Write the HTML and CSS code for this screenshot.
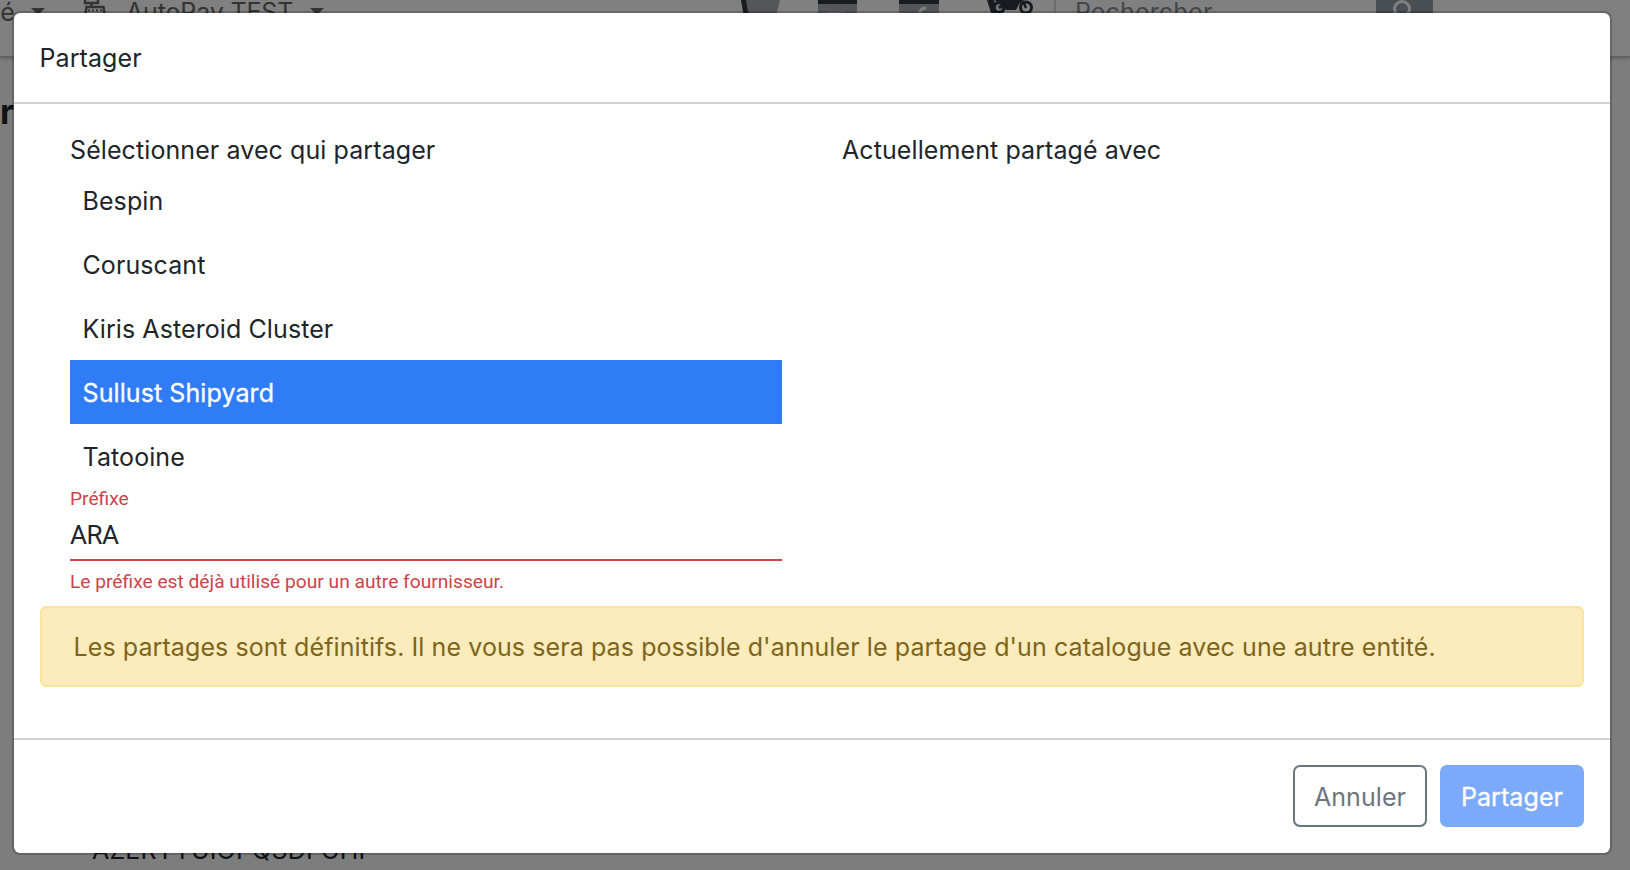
FILE: index.html
```html
<!DOCTYPE html>
<html lang="fr">
<head>
<meta charset="utf-8">
<title>Partager</title>
<link rel="stylesheet" href="styles.css">
</head>
<body>
<div class="page">
  <header class="navbar">
    <span class="nav-text nav-first">Société</span>
    <svg class="caret caret-first" width="14" height="7"><path d="M0 0h14l-7 7z"/></svg>
    <svg class="register" width="24" height="26" viewBox="0 0 24 26"><path d="M2 2v5h13V2M8.500 8v3M3.500 11h17l2 14H1.500z" fill="none" stroke="#333" stroke-width="2.500"/><path d="M5 14.500h2M9 14.500h2M13 14.500h2M17 14.500h2" stroke="#333" stroke-width="2"/></svg>
    <span class="nav-text nav-company">AutoPay TEST</span>
    <svg class="caret caret-second" width="14" height="7"><path d="M0 0h14l-7 7z"/></svg>
    <svg class="tools" width="310" height="24" viewBox="0 0 310 24">
      <path d="M3 0h37l-6 24H9z" fill="#545659"/><path d="M1 0h5l4 24H5z" fill="#1a1b20"/>
      <path d="M78 0h39v24H78zM159 0h40v24h-40z" fill="#545659"/>
      <path d="M78 0h39v4H78zM159 0h40v4h-40z" fill="#1a1b20"/>
      <path d="M86 13l8-1 5 1 4-2 3 2" fill="none" stroke="#707070" stroke-width="1"/>
      <path d="M186 8q-6 0-7 7" fill="none" stroke="#808080" stroke-width="3"/>
      <path d="M247 0h7l2 13h-5zM254 0h30l-5 4-3 6h-10l-3-6-5-2z" fill="#1a1b20"/>
      <circle cx="259" cy="7.500" r="5" fill="#777" stroke="#1a1b20" stroke-width="3.500"/>
      <path d="M259 8l5-4" stroke="#1a1b20" stroke-width="3"/>
      <circle cx="286" cy="7.500" r="5.500" fill="#808080" stroke="#1a1b20" stroke-width="3"/>
      <path d="M283 1l3 7" stroke="#1a1b20" stroke-width="2.500"/>
    </svg>
    <div class="search"><span>Rechercher</span></div>
    <div class="search-btn"><svg class="lens" width="57" height="24"><circle cx="26" cy="9" r="7.500" fill="none" stroke="#808080" stroke-width="3"/><path d="M31 15l7 7" stroke="#808080" stroke-width="3"/></svg></div>
  </header>
  <h1 class="page-title">Partager</h1>
  <div class="page-row">AZERTYUIOPQSDFGHI</div>
</div>
<div class="modal" role="dialog">
  <div class="modal-header">Partager</div>
  <div class="modal-body">
    <div class="columns">
      <section class="column">
        <div class="heading">Sélectionner avec qui partager</div>
        <ul class="list">
          <li>Bespin</li>
          <li>Coruscant</li>
          <li>Kiris Asteroid Cluster</li>
          <li class="selected">Sullust Shipyard</li>
          <li>Tatooine</li>
        </ul>
        <div class="field">
          <label class="field-label">Préfixe</label>
          <div class="field-value">ARA</div>
          <div class="field-error">Le préfixe est déjà utilisé pour un autre fournisseur.</div>
        </div>
      </section>
      <section class="column">
        <div class="heading">Actuellement partagé avec</div>
      </section>
    </div>
    <div class="alert">Les partages sont définitifs. Il ne vous sera pas possible d'annuler le partage d'un catalogue avec une autre entité.</div>
  </div>
  <div class="modal-footer">
    <button class="btn btn-cancel">Annuler</button>
    <button class="btn btn-share">Partager</button>
  </div>
</div>
</body>
</html>
```
FILE: styles.css
```css
* { box-sizing: border-box; }
body {
  margin: 0;
  height: 870px;
  overflow: hidden;
  background: #7d7d7d;
  color: #212529;
  font: 25px/39px Inter, "Liberation Sans", sans-serif;
  letter-spacing: .09px;
}
.page { height: 870px; overflow: hidden; display: flex; flex-direction: column; }
.navbar {
  display: flex;
  align-items: flex-start;
  flex: none;
  height: 57px;
  background: #808080;
  border-bottom: 1px solid #606060;
  box-shadow: 0 1px 4px rgba(0, 0, 0, .3);
}
.nav-text { flex: none; color: #333; line-height: 30px; margin-top: -3px; white-space: nowrap; }
.nav-first { width: 15px; display: flex; justify-content: flex-end; }
.caret { flex: none; fill: #333; margin-top: 8px; }
.caret-first { margin-left: 16px; }
.register { flex: none; margin-left: 38px; margin-top: -4px; }
.nav-company { width: 170px; margin-left: 19px; letter-spacing: -.15px; }
.caret-second { margin-left: 14px; }
.tools { flex: none; margin-left: 416px; }
.search { flex: none; width: 322px; height: 44px; margin-left: 4px; border-left: 2px solid #6c6c6c; padding-left: 19px; color: #42474c; line-height: 30px; letter-spacing: .15px; }
.search span { display: block; margin-top: -3px; }
.search-btn { flex: none; width: 57px; height: 44px; background: #4a4f54; }
.lens { display: block; }
.page-title { display: flex; justify-content: flex-end; margin: 35px 0 0; width: 14px; font-size: 34px; line-height: 40px; color: #101214; white-space: nowrap; }
.page-row { margin: auto 0 5px 92px; color: #101214; line-height: 30px; letter-spacing: .2px; }

.modal {
  position: absolute;
  left: 12px;
  top: 11px;
  width: 1600px;
  height: 844px;
  display: flex;
  flex-direction: column;
  background: #fff;
  background-clip: padding-box;
  border: 2px solid rgba(0, 0, 0, .2);
  border-radius: 8px;
}
.modal-header { height: 91px; padding: 26px 25.5px; border-bottom: 2px solid #ced2d6; }
.modal-body { flex: 1; padding: 26px 26px 0; }
.columns { display: flex; height: 476px; }
.column { flex: 1; padding: 0 30px; }
.heading { height: 38px; line-height: 41px; white-space: nowrap; }
.list { list-style: none; margin: 0; padding: 0; }
.list li { height: 64px; padding: 0 12.5px; line-height: 66px; }
.list .selected { background: #307cf6; color: #fff; -webkit-text-stroke: .3px #fff; }
.list li:last-child { height: 58px; }
.field { font-family: Roboto, sans-serif; color: #cf424a; letter-spacing: 0; }
.field-label { display: block; height: 32px; font-size: 19.2px; line-height: 34px; }
.field-value { height: 47px; border-bottom: 2px solid #cf424a; color: #212529; font-size: 26px; line-height: 42px; letter-spacing: -.5px; }
.field-error { font-size: 19.2px; line-height: 42px; white-space: nowrap; }
.alert {
  height: 81px;
  padding: 20px 31.5px;
  border: 2px solid #fbe4a0;
  border-radius: 6px;
  background: #fcebbb;
  color: #7d6520;
  white-space: nowrap;
}
.modal-footer {
  display: flex;
  justify-content: flex-end;
  gap: 13px;
  height: 115px;
  padding: 25px 26px;
  border-top: 2px solid #ced2d6;
}
.btn { height: 62px; padding: 2px 0 0; border-radius: 7px; font: inherit; letter-spacing: inherit; }
.btn-cancel { width: 134px; border: 2px solid #6c757d; background: #fff; color: #6c757d; }
.btn-share { width: 144px; border: 0; background: #7baafa; color: #fff; -webkit-text-stroke: .3px #fff; }
```
